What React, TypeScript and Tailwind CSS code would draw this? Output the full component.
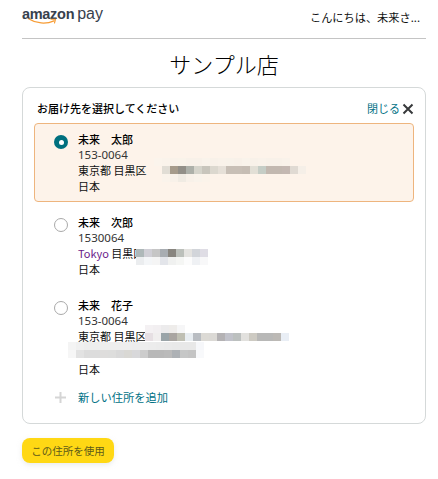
const tile1 = [
  ["#fbf4ec", "#faf3eb", "#f9f2ea", "#f9f3ea", "#f8f1e9", "#f8f1e9", "#f9f3eb", "#f8f1e9", "#f9f2ea", "#f8f2ea", "#f8f1e9", "#f9f3eb", "#f8f1e9", "#f9f2ea", "#f8f1e9", "#f8f1e9", "#f9f2ea", "#fdf3ea", "#fdf3ea"],
  ["#fdf3ea", "#e1ddd5", "#a69b8b", "#928f88", "#adb0a9", "#d5d4cb", "#c8c5bc", "#dcd8cf", "#e6e0d8", "#c8bfb6", "#c8bfb6", "#c6bdb4", "#e2dfd6", "#c5cdc6", "#c2b8b0", "#c2b8b0", "#c4b8b2", "#e0dad3", "#f5efe8"],
  ["#fdf3ea", "#faf3eb", "#f8f1e9", "#f0ebe3", "#f8f1e9", "#f9f3eb", "#fbf3ea", "#fdf3ea", "#fdf3ea", "#fdf3ea", "#fdf3ea", "#fdf3ea", "#fdf3ea", "#fdf3ea", "#fdf3ea", "#fdf3ea", "#fdf3ea", "#fdf3ea", "#fdf3ea"],
];
const tile2 = [
  ["#aeb8b9", "#d0cfd6", "#c6c6c6", "#a8adb2", "#88857f", "#bcc0bb", "#e4e3e0", "#d2d5da", "#dfdde5"],
  ["#ebedef", "#f4f6f8", "#f5f5f5", "#e3e5ea", "#f0f1f0", "#f5f6f4", "#fcfcfc", "#eff1f4", "#f8f8f9"],
];
const tile3a = [["#f4f1f3", "#f2eff1", "#ecebec", "#eeecea", "#f6f6f7"]];
const tile3b = [
  ["#e6dfe3", "#f0eeee", "#9aa4a8", "#a9a5a1", "#bfbfb3", "#e8edf1", "#b9bdc2", "#dcdad5", "#dbd9d5", "#b4b2b4", "#c1c2ca", "#bcc0bf", "#e2e1de", "#cdcac2", "#b8b8b7", "#b8b8b7", "#bcb9b5", "#e9eef5"],
];
const tile3c = [
  ["#f4f4f4", "#f0f0f0", "#eeeeee", "#eeeeee", "#eeeeee", "#eeeeee", "#eeeeee", "#eeeeee", "#ededed", "#ededed", "#ececec", "#ebebeb", "#eaeaea", "#e9e9e9", "#e8e8e8", "#e8e8e8", "#f6f7fa"],
  ["#f6f6f6", "#e2e2e2", "#dcdcdc", "#dcdcdc", "#dedddc", "#dddddc", "#d9d9d9", "#d9d8d4", "#d8d8da", "#cccccc", "#b8b8b8", "#b8b8b8", "#bababa", "#adb1b5", "#c6c7c7", "#c4c4c4", "#f8f9fb"],
];

// pixelated privacy blur that sits over the address text
function Mosaic({ rows, className }: { rows: string[][]; className: string }) {
  return (
    <div className={`absolute ${className}`}>
      {rows.map((row, i) => (
        <div key={i} className="flex">
          {row.map((c, j) => (
            <div key={j} className="w-2 h-2" style={{ backgroundColor: c }} />
          ))}
        </div>
      ))}
    </div>
  );
}

function Radio({ checked }: { checked?: boolean }) {
  return checked ? (
    <div className="w-[14px] h-[14px] rounded-full bg-[#00707f] flex items-center justify-center">
      <div className="w-[5px] h-[5px] rounded-full bg-white" />
    </div>
  ) : (
    <div className="w-[14px] h-[14px] rounded-full border border-[#a9a9a9] bg-white" />
  );
}

function AddressRow({
  name,
  checked,
  className,
  children,
}: {
  name: string;
  checked?: boolean;
  className?: string;
  children: React.ReactNode;
}) {
  return (
    <div className={`relative flex pl-[19px] pr-2 py-[7px] rounded ${className ?? ""}`}>
      <div className="pt-[4px] w-[24px] flex-shrink-0">
        <Radio checked={checked} />
      </div>
      <div className="flex-1 min-w-0 text-[11px] leading-4 text-[#0f1111]">
        <div className="font-medium h-4 text-black">{name}</div>
        {children}
      </div>
    </div>
  );
}

function Zip({ children }: { children: React.ReactNode }) {
  return <div className="h-[15px] text-[11.5px] text-[#333] font-['Noto_Sans',sans-serif]">{children}</div>;
}

export default function App() {
  return (
    <div className="w-[438px] h-[479px] bg-white pl-[22px] pr-[12px] font-['Noto_Sans_CJK_JP','Liberation_Sans',sans-serif] text-[#0f1111] overflow-hidden">
      {/* Header */}
      <div className="h-[39px] flex items-start justify-between border-b border-[#c4c4c4]">
        <div className="relative pt-[2px]">
          <div className="font-['Liberation_Sans',sans-serif] leading-[24px] text-[#37414d] whitespace-nowrap flex items-baseline gap-[3px]">
            <span className="font-bold text-[14.5px] tracking-[-0.3px]">amazon</span>
            <span className="text-[16px]">pay</span>
          </div>
          <svg className="absolute left-[6px] top-[18px]" width="32" height="8" viewBox="0 0 32 8" fill="none">
            <path d="M1 1C8 5.5 18 6.5 26 2.8" stroke="#f79c34" strokeWidth="1.3" strokeLinecap="round" />
            <path d="M23 1.2L27.5 1.2L26.5 5" stroke="#f79c34" strokeWidth="1.1" strokeLinecap="round" />
          </svg>
        </div>
        <div className="pt-[9px] text-[11.2px] leading-4 pr-[6px]">こんにちは、未来さ...</div>
      </div>

      {/* Title */}
      <h1 className="mt-[8px] h-[40px] text-center text-[22px] leading-8 font-light text-black">サンプル店</h1>

      {/* Card */}
      <div className="relative h-[337px] border border-[#d5d9d9] rounded-lg px-[11px]">
        <div className="h-[35px] flex items-center justify-between pl-[3px] pt-[6px]">
          <div className="text-[11px] font-medium text-black">お届け先を選択してください</div>
          <div className="flex items-center gap-[2px] text-[11px] text-[#007185]">
            閉じる
            <svg width="12" height="12" viewBox="0 0 12 12" fill="none">
              <path d="M1.5 1.5L10.5 10.5M10.5 1.5L1.5 10.5" stroke="#37393b" strokeWidth="2" />
            </svg>
          </div>
        </div>

        <AddressRow name="未来　太郎" checked className="h-[79px] border border-[#eeb57e] bg-[#fdf3ea]">
          <Zip>153-0064</Zip>
          <div>東京都 目黒区</div>
          <div>日本</div>
        </AddressRow>
        <Mosaic rows={tile1} className="left-[131px] top-[70px]" />

        <AddressRow name="未来　次郎" className="mt-1 border border-transparent">
          <Zip>1530064</Zip>
          <div><span className="text-[#6a1b8a]">Tokyo</span> 目黒区</div>
          <div>日本</div>
        </AddressRow>
        <Mosaic rows={tile2} className="left-[113px] top-[161px]" />

        <AddressRow name="未来　花子" className="mt-[4px] border border-transparent">
          <Zip>153-0064</Zip>
          <div>東京都 目黒区</div>
          <div className="h-[17px]" />
          <div>日本</div>
        </AddressRow>
        <Mosaic rows={tile3a} className="left-[122px] top-[237px]" />
        <Mosaic rows={tile3b} className="left-[122px] top-[245px]" />
        <Mosaic rows={tile3c} className="left-[45px] top-[254px]" />

        <div className="flex items-center mt-[1px] pl-[20px] h-[22px]">
          <svg width="13" height="13" viewBox="0 0 13 13" fill="none">
            <path d="M6.5 1V12M1 6.5H12" stroke="#d5d5d5" strokeWidth="2" />
          </svg>
          <span className="ml-[11px] text-[11.25px] text-[#007185]">新しい住所を追加</span>
        </div>
      </div>

      {/* Use this address */}
      <div className="mt-[14px] w-[92px] h-[25px] rounded-lg bg-[#ffd814] shadow-[0_2px_5px_rgba(213,217,217,0.5)] flex items-center justify-center text-[10.5px] text-[#5d5a1a]">
        この住所を使用
      </div>
    </div>
  );
}
